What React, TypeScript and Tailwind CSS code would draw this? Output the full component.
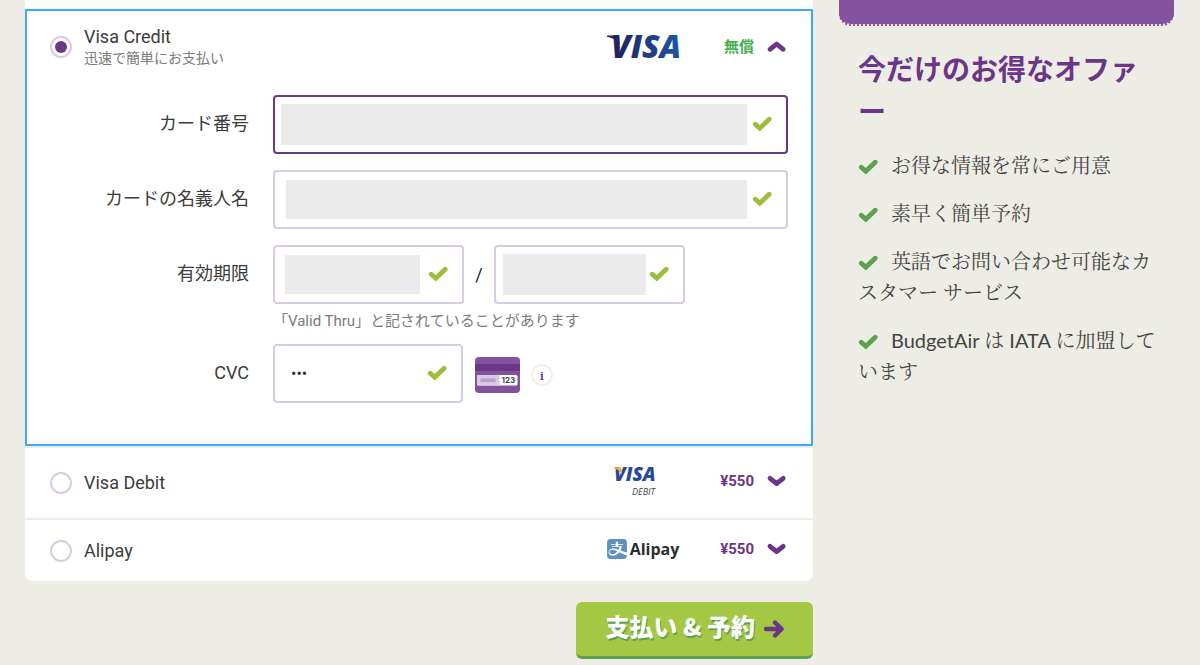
import { useState, type ReactNode } from "react";
import { SiAlipay } from "react-icons/si";
import { clsx } from "clsx";

type Method = "visa-credit" | "visa-debit" | "alipay";

const BENEFITS = [
  "お得な情報を常にご用意",
  "素早く簡単予約",
  "英語でお問い合わせ可能なカスタマー サービス",
  "BudgetAir は IATA に加盟しています",
];

function CheckIcon({ className }: { className?: string }) {
  return (
    <svg
      className={clsx("shrink-0", className)}
      width="20"
      height="17"
      viewBox="0 0 20 17"
      fill="none"
      stroke="currentColor"
      strokeWidth="4.8"
      strokeLinecap="round"
      aria-hidden="true"
    >
      <path d="M3.300 8.200 7.800 12.300 17.200 3.200" />
    </svg>
  );
}

function Chevron({ up }: { up: boolean }) {
  return (
    <svg
      className="shrink-0 text-[#6b3688]"
      width="22"
      height="14"
      viewBox="0 0 22 14"
      fill="none"
      stroke="currentColor"
      strokeWidth="4.8"
      strokeLinecap="round"
      strokeLinejoin="round"
      aria-hidden="true"
    >
      <path d={up ? "M4 9.300 10.600 4 17.200 9.300" : "M4 4.300 10.600 9.500 17.200 4.300"} />
    </svg>
  );
}

function VisaLogo() {
  return (
    <svg width="76" height="44" viewBox="0 0 76 44" role="img" aria-label="Visa">
      <defs>
        <linearGradient id="visa-blue" gradientUnits="userSpaceOnUse" x1="2" y1="29" x2="74" y2="15">
          <stop offset="0" stopColor="#221c54" />
          <stop offset="0.45" stopColor="#20367c" />
          <stop offset="1" stopColor="#1c56a5" />
        </linearGradient>
      </defs>
      <path d="M2 10.500H14L14.500 20C12.500 15.500 8 12.800 2 11.700Z" fill="url(#visa-blue)" />
      <text
        x="6"
        y="33"
        fill="url(#visa-blue)"
        className="font-['Open_Sans',sans-serif] text-[32px] font-extrabold italic"
      >
        VISA
      </text>
    </svg>
  );
}

function VisaDebitLogo() {
  return (
    <svg width="76" height="50" viewBox="0 0 76 50" role="img" aria-label="Visa Debit">
      <text
        x="9"
        y="25"
        fill="#27489b"
        className="font-['Open_Sans',sans-serif] text-[19px] font-extrabold italic"
      >
        VISA
      </text>
      <path d="M8.500 11.300H14.500C15.500 11.300 16 11.800 16.200 12.600L17 18.500C15 15 12.500 13 8.500 12.200Z" fill="#efad45" />
      <text
        x="50"
        y="39"
        textAnchor="end"
        fill="#444"
        className="font-['Open_Sans',sans-serif] text-[9px] italic"
      >
        DEBIT
      </text>
    </svg>
  );
}

function AlipayLogo() {
  return (
    <span className="flex items-center gap-[3px] font-['Open_Sans',sans-serif] text-base leading-6 font-bold text-[#2e2e2e]">
      <SiAlipay className="size-5 shrink-0 text-[#5e90be]" aria-hidden="true" />
      Alipay
    </span>
  );
}

/** Back of a card with the security code marked */
function CvcCard() {
  return (
    <svg width="45" height="36" viewBox="0 0 45 36" role="img" aria-label="CVC">
      <rect width="45" height="36" rx="4" fill="#82529d" />
      <rect y="7" width="45" height="7" fill="#693785" />
      <rect x="2" y="18" width="40.500" height="10.500" rx="1.500" fill="#fff" />
      <path d="M3.500 18H24.500V28.500H3.500A1.500 1.500 0 0 1 2 27V19.500A1.500 1.500 0 0 1 3.500 18Z" fill="#d8cae2" />
      <rect x="5.500" y="21.500" width="15" height="3.500" fill="#b89cca" />
      <text x="26.500" y="26" fill="#34475c" className="font-['Inter',sans-serif] text-[8px] font-bold">
        123
      </text>
    </svg>
  );
}

interface MethodHeaderProps {
  id: Method;
  title: string;
  subtitle?: string;
  price: string;
  free?: boolean;
  logo: ReactNode;
  selected: Method;
  onSelect: (id: Method) => void;
  className: string;
}

function MethodHeader({
  id,
  title,
  subtitle,
  price,
  free,
  logo,
  selected,
  onSelect,
  className,
}: MethodHeaderProps) {
  const active = selected === id;

  return (
    <label className={clsx("flex cursor-pointer items-center gap-3", className)}>
      <input
        type="radio"
        name="method"
        checked={active}
        onChange={() => onSelect(id)}
        className="size-[22px] shrink-0 appearance-none rounded-full border-2 border-[#d8cbe2] bg-white bg-clip-content p-[3px] outline-none checked:bg-[#6b3688]"
      />
      <span className="flex-1 text-lg leading-[22px] text-[#3c3c3c]">
        {title}
        {subtitle && <span className="block text-sm leading-5 text-[#7b7b7b]">{subtitle}</span>}
      </span>
      <span className={clsx("flex items-center", !subtitle && "pb-1")}>
        <span className="flex w-[76px] justify-center">{logo}</span>
        <span
          className={clsx(
            "mr-3 w-[73px] text-right text-[15px] leading-5 font-bold",
            free ? "text-[#43ad50]" : "text-[#6b3688]"
          )}
        >
          {price}
        </span>
        <Chevron up={active} />
      </span>
    </label>
  );
}

interface FieldProps {
  id: string;
  label?: string;
  type?: string;
  value?: string;
  focused?: boolean;
  className?: string;
  inputClassName: string;
}

function Field({ id, label, type = "text", value, focused, className, inputClassName }: FieldProps) {
  return (
    <div
      className={clsx(
        "flex h-[59px] items-center rounded border-2 bg-white",
        focused ? "border-[#6b3688]" : "border-[#d8cbe2]",
        className
      )}
    >
      <input
        id={id}
        type={type}
        aria-label={label}
        defaultValue={value}
        className={clsx("min-w-0 flex-1 outline-none", inputClassName)}
      />
      <CheckIcon className="text-[#9bbf3c]" />
    </div>
  );
}

function FormRow({ id, label, children }: { id: string; label: string; children: ReactNode }) {
  return (
    <div className="flex gap-6">
      <label htmlFor={id} className="w-[222px] shrink-0 text-right text-lg leading-[57px] text-[#3c3c3c]">
        {label}
      </label>
      <div className="min-w-0 flex-1">{children}</div>
    </div>
  );
}

function CardForm() {
  return (
    <div className="flex flex-col gap-4 pr-[23px] pb-[41px]">
      <FormRow id="number" label="カード番号">
        <Field
          id="number"
          focused
          className="pr-3.5 pl-1.5"
          inputClassName="mr-[5px] h-[41px] bg-[#ebebeb]"
        />
      </FormRow>
      <FormRow id="holder" label="カードの名義人名">
        <Field id="holder" className="pr-3.5 pl-[11px]" inputClassName="mr-[5px] h-[39px] bg-[#ebebeb]" />
      </FormRow>
      <FormRow id="month" label="有効期限">
        <div className="flex items-center">
          <Field
            id="month"
            className="w-[191px] pr-3.5 pl-2.5"
            inputClassName="mr-2 h-[39px] bg-[#ebebeb]"
          />
          <span className="w-[30px] text-center text-lg text-[#222]">/</span>
          <Field
            id="year"
            label="年"
            className="w-[191px] pr-3.5 pl-[7px]"
            inputClassName="mr-[3px] h-[41px] bg-[#ebebeb]"
          />
        </div>
        <p className="mt-1.5 -mb-1 text-[15px] leading-[22px] text-[#7b7b7b]">
          「Valid Thru」と記されていることがあります
        </p>
      </FormRow>
      <FormRow id="cvc" label="CVC">
        <div className="flex items-center gap-3">
          <Field
            id="cvc"
            type="password"
            value="123"
            className="w-[190px] pr-3.5 pl-4"
            inputClassName="h-10 text-base text-[#333]"
          />
          <div className="flex items-center gap-[11px] pt-[3px]">
            <CvcCard />
            <button
              type="button"
              className="flex size-[22px] items-center justify-center rounded-full border-2 border-[#f1eff6] font-['Noto_Serif','DejaVu_Serif',serif] text-[11px] leading-none font-bold text-[#6b3688]"
            >
              i
            </button>
          </div>
        </div>
      </FormRow>
    </div>
  );
}

function OfferSidebar() {
  return (
    <aside>
      <div className="h-[26px] rounded-b-xl border-b-2 border-dotted border-[#eeede5] bg-[#82529d]" />
      <div className="pt-6 pr-3.5 pl-[19px]">
        <h2 className="text-[28px] leading-[42px] font-bold text-[#6b3688]">今だけのお得なオファー</h2>
        <ul className="mt-4 flex flex-col gap-[17px] font-['Lato','Noto_Serif_CJK_JP','Noto_Sans_CJK_JP',serif] text-xl leading-[31px] text-[#444]">
          {BENEFITS.map((benefit) => (
            <li key={benefit}>
              <CheckIcon className="mr-[13px] inline-block align-[-3px] text-[#5da34f]" />
              {benefit}
            </li>
          ))}
        </ul>
      </div>
    </aside>
  );
}

export default function App() {
  const [selected, setSelected] = useState<Method>("visa-credit");

  return (
    <div className="grid min-h-screen grid-cols-[minmax(0,1fr)_335px] items-start gap-[26px] bg-[#eeede5] pr-[26px] pl-[25px] font-['Roboto','Noto_Sans_CJK_JP',sans-serif]">
      <main>
        <div className="overflow-hidden rounded-b-lg bg-white pt-[9px]">
          <section className="border-2 border-[#3fa9f5]">
            <MethodHeader
              id="visa-credit"
              title="Visa Credit"
              subtitle="迅速で簡単にお支払い"
              price="無償"
              free
              logo={<VisaLogo />}
              selected={selected}
              onSelect={setSelected}
              className="px-[23px] pt-3.5 pb-[26px]"
            />
            {selected === "visa-credit" && <CardForm />}
          </section>
          <section className="border-t-2 border-[#eeede5]">
            <MethodHeader
              id="visa-debit"
              title="Visa Debit"
              price="¥550"
              logo={<VisaDebitLogo />}
              selected={selected}
              onSelect={setSelected}
              className="h-[70px] px-[25px]"
            />
          </section>
          <section className="border-t-2 border-[#eeede5]">
            <MethodHeader
              id="alipay"
              title="Alipay"
              price="¥550"
              logo={<AlipayLogo />}
              selected={selected}
              onSelect={setSelected}
              className="h-[61px] px-[25px]"
            />
          </section>
        </div>
        <div className="mt-[21px] flex justify-end">
          <button
            type="submit"
            className="flex h-[57px] cursor-pointer items-center gap-2 rounded-md border-b-3 border-[#5da34f] bg-[#a4c843] pr-7 pl-[29px] font-['Noto_Sans_CJK_JP',sans-serif] text-2xl leading-none font-black text-white text-shadow-[1px_2px_0_#5da34f]"
          >
            <span className="pb-1.5">支払い & 予約</span>
            <svg
              width="22"
              height="20"
              viewBox="0 0 22 20"
              fill="none"
              stroke="#6b3688"
              strokeWidth="4.4"
              strokeLinecap="round"
              strokeLinejoin="round"
              aria-hidden="true"
            >
              <path d="M3 10H17M12 3.500 18.700 10 12 16.500" />
            </svg>
          </button>
        </div>
      </main>
      <OfferSidebar />
    </div>
  );
}
